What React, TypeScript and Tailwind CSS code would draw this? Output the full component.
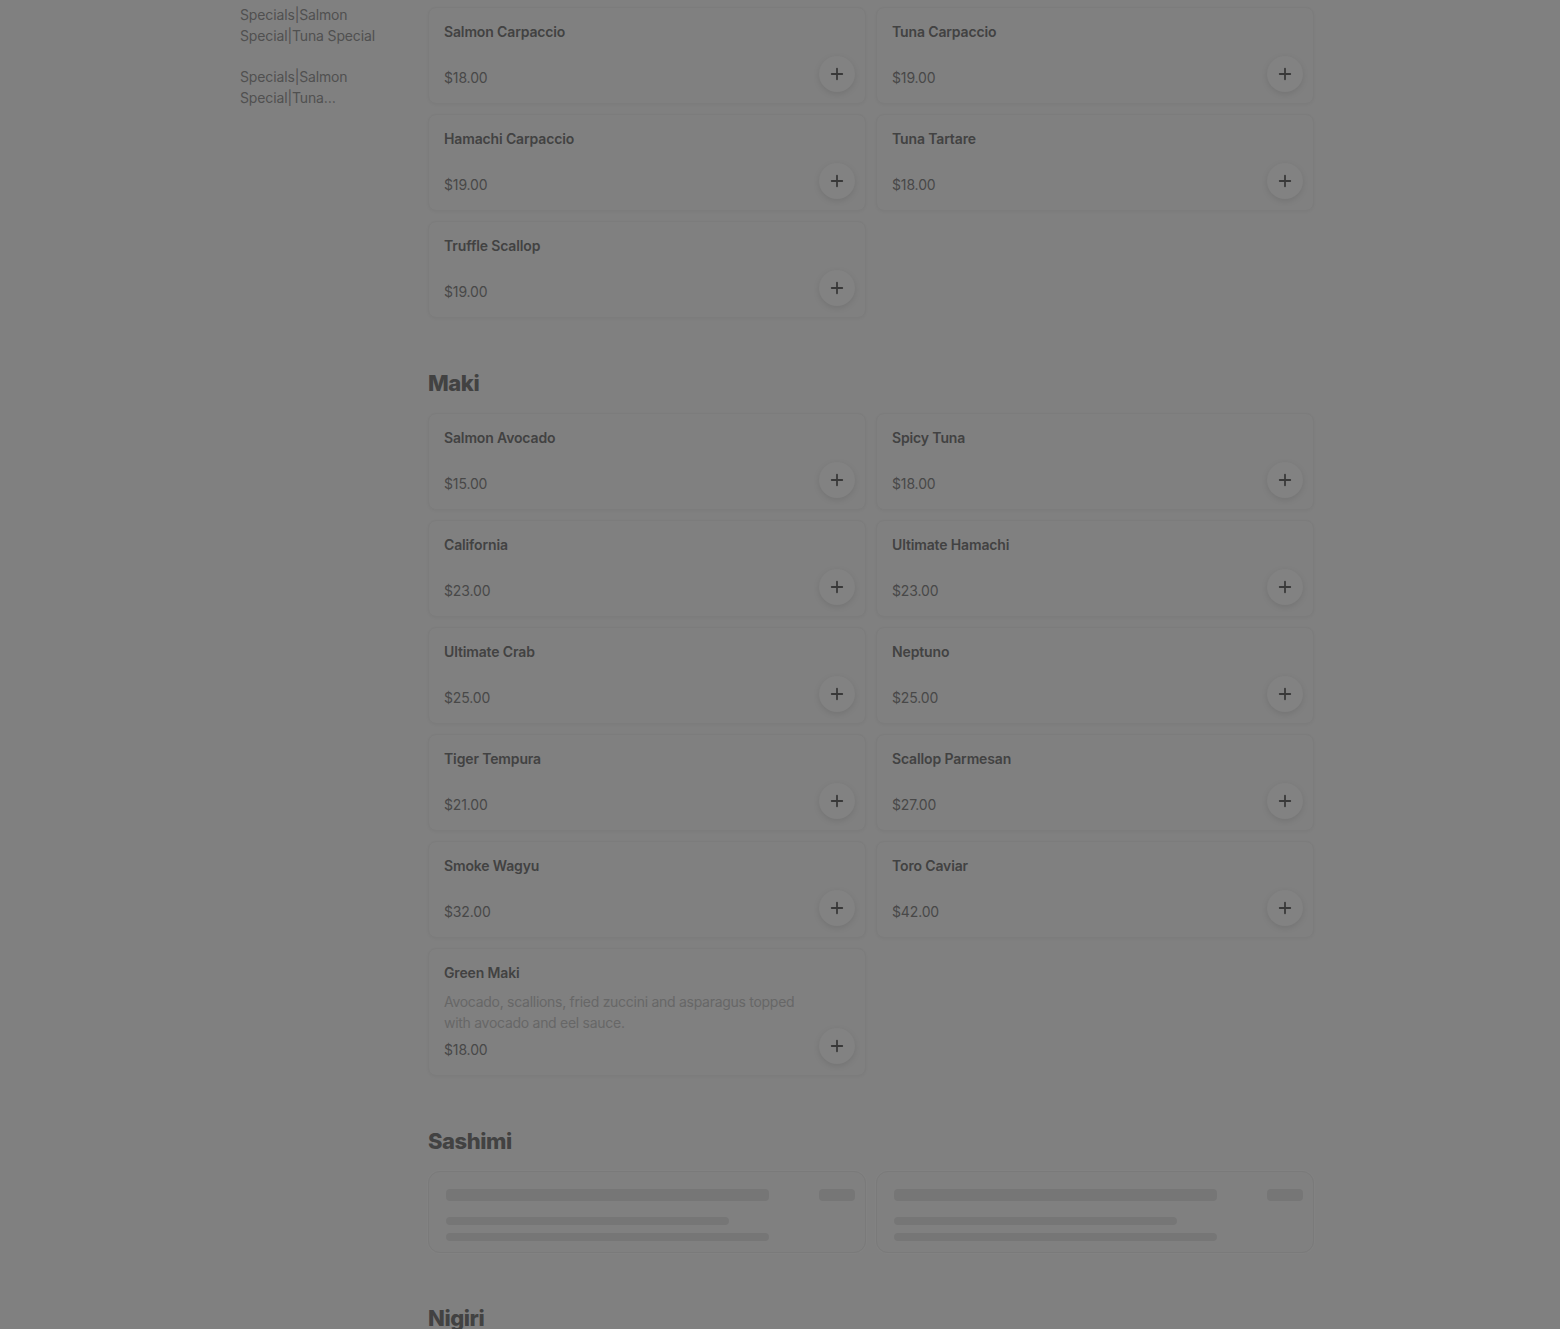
import React from 'react';
import { Plus } from 'lucide-react';

type Item = { name: string; price: string; description?: string };

const SIDEBAR = [
  'Specials|Salmon Special|Tuna Special',
  'Specials|Salmon Special|Tuna Special|Hamachi Special',
];

const SPECIALS: Item[] = [
  { name: 'Salmon Carpaccio', price: '$18.00' },
  { name: 'Tuna Carpaccio', price: '$19.00' },
  { name: 'Hamachi Carpaccio', price: '$19.00' },
  { name: 'Tuna Tartare', price: '$18.00' },
  { name: 'Truffle Scallop', price: '$19.00' },
];

const MAKI: Item[] = [
  { name: 'Salmon Avocado', price: '$15.00' },
  { name: 'Spicy Tuna', price: '$18.00' },
  { name: 'California', price: '$23.00' },
  { name: 'Ultimate Hamachi', price: '$23.00' },
  { name: 'Ultimate Crab', price: '$25.00' },
  { name: 'Neptuno', price: '$25.00' },
  { name: 'Tiger Tempura', price: '$21.00' },
  { name: 'Scallop Parmesan', price: '$27.00' },
  { name: 'Smoke Wagyu', price: '$32.00' },
  { name: 'Toro Caviar', price: '$42.00' },
  {
    name: 'Green Maki',
    price: '$18.00',
    description: 'Avocado, scallions, fried zuccini and asparagus topped with avocado and eel sauce.',
  },
];

const MenuCard: React.FC<{ item: Item }> = ({ item }) => (
  <div className="relative flex flex-col rounded-lg border border-[#7c7c7c] px-[15px] pt-[14px] pb-[15px] shadow-[0_1px_3px_rgba(0,0,0,0.04)]">
    <div className="text-[14px] leading-5 font-semibold tracking-[-0.01em] text-[#424242]">{item.name}</div>
    {item.description ? (
      <p className="mt-2 max-w-[372px] text-[14px] leading-[21px] tracking-[-0.02em] text-[#676767]">{item.description}</p>
    ) : null}
    <div className={`${item.description ? 'mt-[7px]' : 'mt-[26px]'} text-[14px] leading-5 tracking-[-0.01em] text-[#484848]`}>{item.price}</div>
    <button className="absolute right-[10px] bottom-[11px] flex h-9 w-9 items-center justify-center rounded-full bg-[#828282] shadow-[0_2px_6px_rgba(0,0,0,0.1)]">
      <Plus size={18} strokeWidth={2.4} className="text-[#393939]" />
    </button>
  </div>
);

const SkeletonCard = () => (
  <div className="rounded-xl border border-[#7a7a7a] pt-[17px] pb-[11px] pl-[17px] pr-[10px] shadow-[0_0_0_1px_rgba(255,255,255,0.02)]">
    <div className="flex items-center justify-between">
      <div className="h-3 w-[323px] rounded-sm bg-[#767676]" />
      <div className="h-3 w-9 rounded-sm bg-[#767676]" />
    </div>
    <div className="mt-4 h-2 w-[283px] rounded-full bg-[#767676]" />
    <div className="mt-2 h-2 w-[323px] rounded-full bg-[#767676]" />
  </div>
);

const Section: React.FC<{ title?: string; children: React.ReactNode; className?: string }> = ({ title, children, className }) => (
  <section className={className}>
    {title ? (
      <h2 className="mb-[14px] text-[22px] leading-8 font-extrabold tracking-[-0.02em] text-[#424242]">{title}</h2>
    ) : null}
    <div className="grid grid-cols-2 gap-x-[10px] gap-y-[10px]">{children}</div>
  </section>
);

export default function App() {
  return (
    <div className="min-h-screen bg-[#808080] font-['Inter',sans-serif]">
      <div className="mx-auto flex w-[1080px]">
        <aside className="w-[188px] shrink-0 pt-1">
          <ul className="flex w-[140px] flex-col gap-5">
            {SIDEBAR.map((s) => (
              <li key={s} className="line-clamp-2 text-[14px] leading-[21px] tracking-[-0.01em] text-[#505050]">
                {s}
              </li>
            ))}
          </ul>
        </aside>
        <main className="w-[886px] pt-[7px]">
          <Section>
            {SPECIALS.map((it) => <MenuCard key={it.name} item={it} />)}
          </Section>
          <Section title="Maki" className="mt-[49px]">
            {MAKI.map((it) => <MenuCard key={it.name} item={it} />)}
          </Section>
          <Section title="Sashimi" className="mt-[49px]">
            <SkeletonCard />
            <SkeletonCard />
          </Section>
          <Section title="Nigiri" className="mt-[49px]">
            <SkeletonCard />
            <SkeletonCard />
          </Section>
        </main>
      </div>
    </div>
  );
}
